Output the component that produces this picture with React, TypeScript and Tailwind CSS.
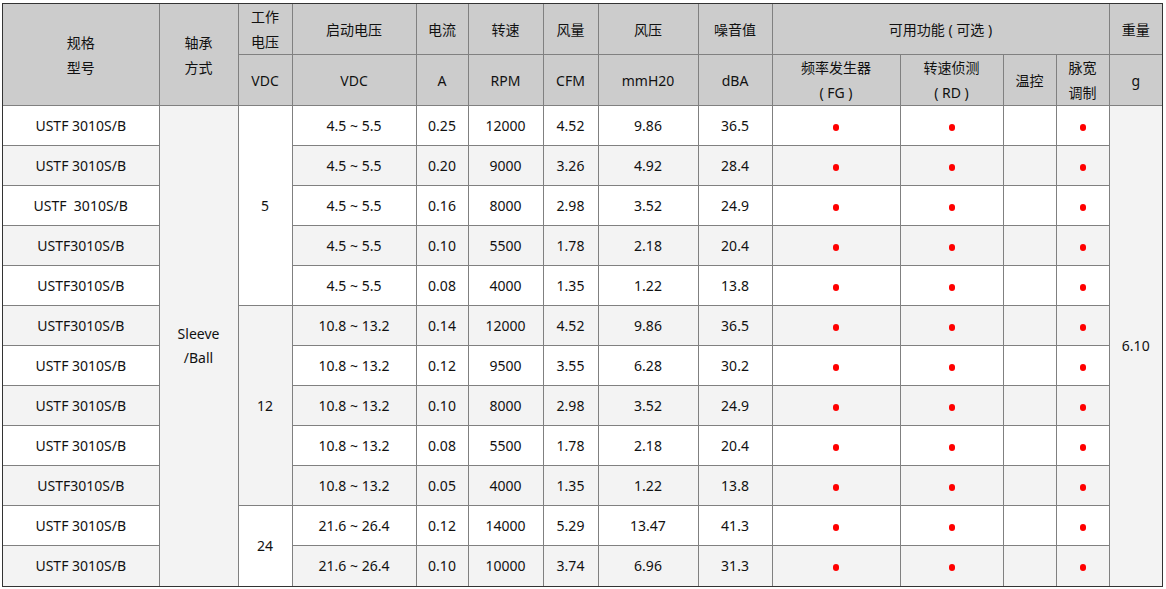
import React from 'react';

type Row = {
  model: string;
  volt: string;
  amp: string;
  rpm: string;
  cfm: string;
  pressure: string;
  noise: string;
};

const rows: Row[] = [
  { model: 'USTF 3010S/B', volt: '4.5 ~ 5.5', amp: '0.25', rpm: '12000', cfm: '4.52', pressure: '9.86', noise: '36.5' },
  { model: 'USTF 3010S/B', volt: '4.5 ~ 5.5', amp: '0.20', rpm: '9000', cfm: '3.26', pressure: '4.92', noise: '28.4' },
  { model: 'USTF  3010S/B', volt: '4.5 ~ 5.5', amp: '0.16', rpm: '8000', cfm: '2.98', pressure: '3.52', noise: '24.9' },
  { model: 'USTF3010S/B', volt: '4.5 ~ 5.5', amp: '0.10', rpm: '5500', cfm: '1.78', pressure: '2.18', noise: '20.4' },
  { model: 'USTF3010S/B', volt: '4.5 ~ 5.5', amp: '0.08', rpm: '4000', cfm: '1.35', pressure: '1.22', noise: '13.8' },
  { model: 'USTF3010S/B', volt: '10.8 ~ 13.2', amp: '0.14', rpm: '12000', cfm: '4.52', pressure: '9.86', noise: '36.5' },
  { model: 'USTF 3010S/B', volt: '10.8 ~ 13.2', amp: '0.12', rpm: '9500', cfm: '3.55', pressure: '6.28', noise: '30.2' },
  { model: 'USTF 3010S/B', volt: '10.8 ~ 13.2', amp: '0.10', rpm: '8000', cfm: '2.98', pressure: '3.52', noise: '24.9' },
  { model: 'USTF 3010S/B', volt: '10.8 ~ 13.2', amp: '0.08', rpm: '5500', cfm: '1.78', pressure: '2.18', noise: '20.4' },
  { model: 'USTF3010S/B', volt: '10.8 ~ 13.2', amp: '0.05', rpm: '4000', cfm: '1.35', pressure: '1.22', noise: '13.8' },
  { model: 'USTF 3010S/B', volt: '21.6 ~ 26.4', amp: '0.12', rpm: '14000', cfm: '5.29', pressure: '13.47', noise: '41.3' },
  { model: 'USTF 3010S/B', volt: '21.6 ~ 26.4', amp: '0.10', rpm: '10000', cfm: '3.74', pressure: '6.96', noise: '31.3' },
];

// rated voltage groups: row index where group starts -> [label, span]
const voltGroups: Record<number, [string, number]> = {
  0: ['5', 5],
  5: ['12', 5],
  10: ['24', 2],
};

const th = 'border border-[#808080] bg-[#cccccc] font-normal text-center align-middle leading-[25px] p-0';
const td = 'border border-[#808080] text-center align-middle p-0 h-[40px]';

function Dot() {
  return <span className="inline-block w-[6px] h-[7px] rounded-full bg-[#ff0000] align-middle" />;
}

export default function App() {
  return (
    <div className="w-[1166px] h-[589px] bg-white pl-[2px] pt-[3px]">
      <div
        className="w-[1161px] border border-[#333333] text-[14px] text-[#111111]"
        style={{ fontFamily: '"Noto Sans", "Noto Sans CJK SC", sans-serif' }}
      >
        <table className="w-full table-fixed border-collapse border-hidden">
          <colgroup>
            <col className="w-[156px]" />
            <col className="w-[79px]" />
            <col className="w-[54px]" />
            <col className="w-[124px]" />
            <col className="w-[52px]" />
            <col className="w-[75px]" />
            <col className="w-[55px]" />
            <col className="w-[100px]" />
            <col className="w-[74px]" />
            <col className="w-[128px]" />
            <col className="w-[103px]" />
            <col className="w-[53px]" />
            <col className="w-[53px]" />
            <col />
          </colgroup>
          <thead>
            <tr className="h-[50px]">
              <th rowSpan={2} className={th}>
                规格
                <br />
                型号
              </th>
              <th rowSpan={2} className={th}>
                轴承
                <br />
                方式
              </th>
              <th className={th}>
                工作
                <br />
                电压
              </th>
              <th className={th}>启动电压</th>
              <th className={th}>电流</th>
              <th className={th}>转速</th>
              <th className={th}>风量</th>
              <th className={th}>风压</th>
              <th className={th}>噪音值</th>
              <th colSpan={4} className={th}>
                可用功能 ( 可选 )
              </th>
              <th className={th}>重量</th>
            </tr>
            <tr className="h-[50px]">
              <th className={th}>VDC</th>
              <th className={th}>VDC</th>
              <th className={th}>A</th>
              <th className={th}>RPM</th>
              <th className={th}>CFM</th>
              <th className={th}>mmH20</th>
              <th className={th}>dBA</th>
              <th className={th}>
                频率发生器
                <br />
                ( FG )
              </th>
              <th className={th}>
                转速侦测
                <br />
                ( RD )
              </th>
              <th className={th}>温控</th>
              <th className={th}>
                脉宽
                <br />
                调制
              </th>
              <th className={th}>g</th>
            </tr>
          </thead>
          <tbody>
            {rows.map((r, i) => {
              const bg = i % 2 === 0 ? 'bg-white' : 'bg-[#f3f3f3]';
              const group = voltGroups[i];
              return (
                <tr key={i} className={bg}>
                  <td className={`${td} whitespace-pre`}>{r.model}</td>
                  {i === 0 && (
                    <td rowSpan={12} className={`${td} bg-[#f3f3f3] leading-[24px]`}>
                      Sleeve
                      <br />
                      /Ball
                    </td>
                  )}
                  {group && (
                    <td rowSpan={group[1]} className={td}>
                      {group[0]}
                    </td>
                  )}
                  <td className={td}>{r.volt}</td>
                  <td className={td}>{r.amp}</td>
                  <td className={td}>{r.rpm}</td>
                  <td className={td}>{r.cfm}</td>
                  <td className={td}>{r.pressure}</td>
                  <td className={td}>{r.noise}</td>
                  <td className={td}>
                    <Dot />
                  </td>
                  <td className={td}>
                    <Dot />
                  </td>
                  <td className={td}></td>
                  <td className={td}>
                    <Dot />
                  </td>
                  {i === 0 && (
                    <td rowSpan={12} className={`${td} bg-[#f3f3f3]`}>
                      6.10
                    </td>
                  )}
                </tr>
              );
            })}
          </tbody>
        </table>
      </div>
    </div>
  );
}
